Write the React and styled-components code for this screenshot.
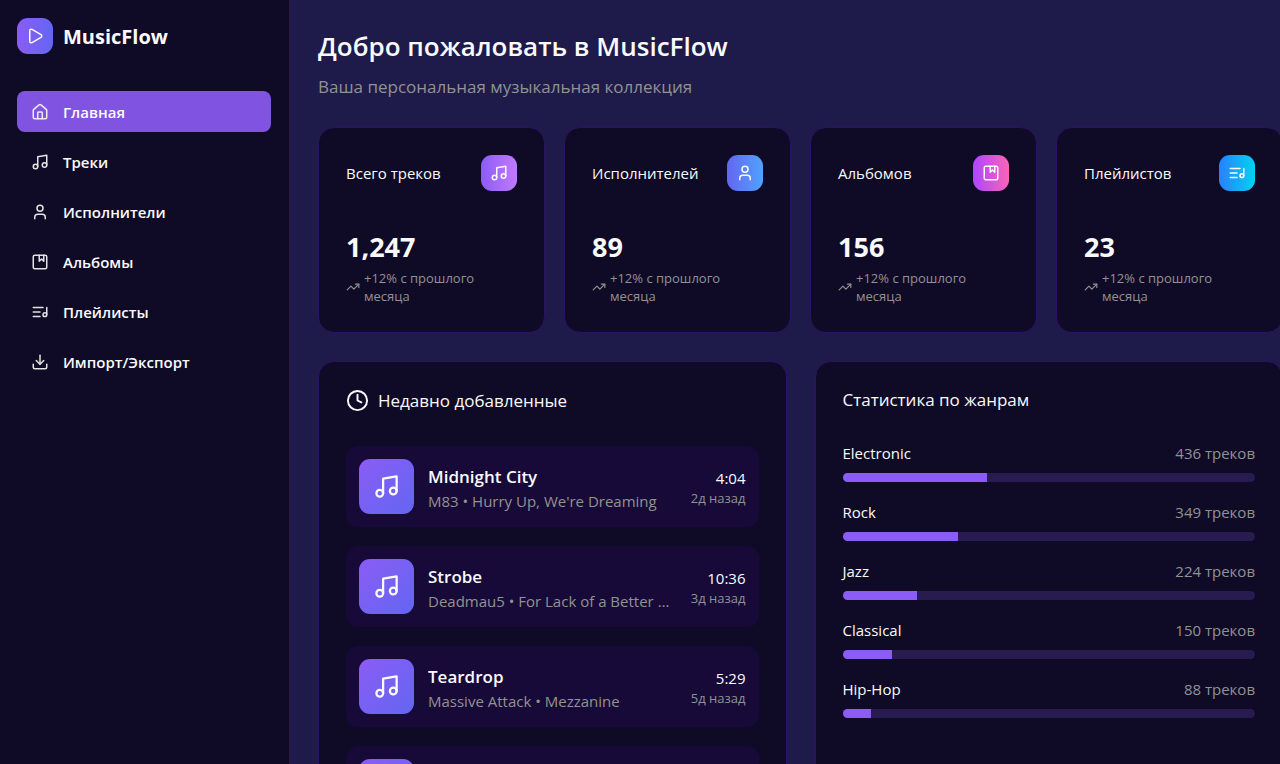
import React from "react";
import styled, { createGlobalStyle } from "styled-components";
import { Play, House, Music, User, Album, Download, TrendingUp, Clock } from "lucide-react";

const color = {
  page: "#1e1b4b",
  panel: "#0f0b27",
  line: "#2e1065",
  row: "#170a38",
  track: "#281b50",
  accent: "#8b5cf6",
  active: "#8054e0",
  text: "#fafafa",
  muted: "#929292",
};

const GlobalStyle = createGlobalStyle`
  *, *::before, *::after { box-sizing: border-box; }
  body {
    margin: 0;
    background: ${color.page};
    color: ${color.text};
    font-family: "Open Sans", "Noto Sans", sans-serif;
    font-size: 15px;
    line-height: 24px;
  }
  h1, h2, h3, p, ul { margin: 0; padding: 0; }
  ul { list-style: none; }
  svg { display: block; flex: none; }
`;

const Layout = styled.div`
  display: flex;
  height: 100vh;
  overflow: hidden;
`;

const Sidebar = styled.aside`
  flex: none;
  width: 290px;
  padding: 18px 18px 18px 17px;
  background: ${color.panel};
  border-right: 1px solid ${color.line};
`;

const Brand = styled.div`
  display: flex;
  align-items: center;
  gap: 10px;
  margin-bottom: 37px;
  font-size: 20px;
  font-weight: 700;
`;

const BrandName = styled.span`
  padding-top: 2px;
`;

const IconTile = styled.span`
  display: flex;
  flex: none;
  align-items: center;
  justify-content: center;
  width: ${(p) => p.$size}px;
  height: ${(p) => p.$size}px;
  border-radius: 11px;
  background: ${(p) => p.$fill};
  color: ${color.text};
`;

const Nav = styled.nav`
  display: flex;
  flex-direction: column;
  gap: 9px;
`;

const NavLink = styled.a`
  display: flex;
  align-items: center;
  gap: 14px;
  height: 41px;
  padding: 0 14px;
  border-radius: 8px;
  background: ${(p) => (p.$active ? color.active : "transparent")};
  color: ${color.text};
  font-weight: 600;
  text-decoration: none;

  svg { opacity: 0.9; }
`;

const Main = styled.main`
  flex: 1;
  min-width: 0;
  padding: 28px 0 0 28px;
  overflow: hidden;
`;

const Content = styled.div`
  margin-right: -3px;
`;

const Title = styled.h1`
  font-size: 26px;
  font-weight: 600;
  line-height: 36px;
`;

const Subtitle = styled.p`
  margin: 9px 0 26px;
  color: ${color.muted};
  font-size: 17px;
  line-height: 28px;
`;

const StatGrid = styled.section`
  display: grid;
  grid-template-columns: repeat(4, 1fr);
  gap: 19px;
  margin-bottom: 28px;
`;

const Card = styled.section`
  min-width: 0;
  padding: 27px;
  background: ${color.panel};
  border: 1px solid ${color.line};
  border-radius: 16px;
`;

const StatHead = styled.div`
  display: flex;
  align-items: center;
  justify-content: space-between;
  margin-bottom: 38px;
`;

const StatName = styled.h3`
  font-size: 15px;
  font-weight: 400;
`;

const StatValue = styled.p`
  font-size: 27px;
  font-weight: 700;
  line-height: 36px;
  margin-bottom: 4px;
`;

const Trend = styled.p`
  display: flex;
  align-items: center;
  gap: 4px;
  color: ${color.muted};
  font-size: 13px;
  line-height: 18px;
`;

const Columns = styled.div`
  display: grid;
  grid-template-columns: repeat(2, 1fr);
  gap: 28px;
`;

const CardTitle = styled.h2`
  display: flex;
  align-items: center;
  gap: 9px;
  font-size: 17px;
  font-weight: 400;
  line-height: 22px;
  margin-bottom: 30px;
`;

const TrackList = styled.ul`
  display: flex;
  flex-direction: column;
  gap: 19px;
  margin-top: 34px;
`;

const TrackRow = styled.li`
  display: flex;
  align-items: center;
  gap: 14px;
  padding: 13px;
  border-radius: 12px;
  background: ${color.row};
`;

const TrackText = styled.div`
  flex: 1;
  min-width: 0;
  padding-top: 4px;
`;

const TrackName = styled.h3`
  font-size: 17px;
  font-weight: 600;
  line-height: 25px;
`;

const TrackMeta = styled.p`
  overflow: hidden;
  color: ${color.muted};
  font-size: 15px;
  text-overflow: ellipsis;
  white-space: nowrap;
`;

const TrackTime = styled.div`
  padding-top: 2px;
  text-align: right;
  font-size: 15px;
  line-height: 20px;
`;

const Ago = styled.p`
  color: ${color.muted};
  font-size: 13px;
`;

const GenreList = styled.ul`
  display: flex;
  flex-direction: column;
  gap: 18px;
`;

const GenreHead = styled.div`
  display: flex;
  justify-content: space-between;
  margin-bottom: 8px;
`;

const GenreCount = styled.span`
  color: ${color.muted};
`;

const Bar = styled.div`
  height: 9px;
  overflow: hidden;
  border-radius: 5px;
  background: ${color.track};
`;

const BarFill = styled.div`
  height: 100%;
  background: ${color.accent};
`;

function Playlist({ size = 24 }) {
  return (
    <svg width={size} height={size} viewBox="0 0 24 24" fill="none" stroke="currentColor" strokeWidth="2" strokeLinecap="round" strokeLinejoin="round" aria-hidden="true">
      <path d="M21 15V6" />
      <path d="M18.5 18a2.5 2.5 0 1 0 0-5 2.5 2.5 0 0 0 0 5Z" />
      <path d="M12 12H3" />
      <path d="M16 6H3" />
      <path d="M12 18H3" />
    </svg>
  );
}

const violet = "linear-gradient(135deg, #8b5cf6, #6366f1)";

const navItems = [
  { label: "Главная", icon: House, active: true },
  { label: "Треки", icon: Music },
  { label: "Исполнители", icon: User },
  { label: "Альбомы", icon: Album },
  { label: "Плейлисты", icon: Playlist },
  { label: "Импорт/Экспорт", icon: Download },
];

const stats = [
  { label: "Всего треков", value: "1,247", icon: Music, fill: "linear-gradient(90deg, #8b5cf6, #c27aff)" },
  { label: "Исполнителей", value: "89", icon: User, fill: "linear-gradient(90deg, #6366f1, #51a2ff)" },
  { label: "Альбомов", value: "156", icon: Album, fill: "linear-gradient(90deg, #ad46ff, #fb64b6)" },
  { label: "Плейлистов", value: "23", icon: Playlist, fill: "linear-gradient(90deg, #2b7fff, #00d3f2)" },
];

const tracks = [
  { name: "Midnight City", meta: "M83 • Hurry Up, We're Dreaming", time: "4:04", ago: "2д назад" },
  { name: "Strobe", meta: "Deadmau5 • For Lack of a Better Name", time: "10:36", ago: "3д назад" },
  { name: "Teardrop", meta: "Massive Attack • Mezzanine", time: "5:29", ago: "5д назад" },
  { name: "", meta: "", time: "", ago: "" },
];

const genres = [
  { name: "Electronic", count: 436, share: 35 },
  { name: "Rock", count: 349, share: 28 },
  { name: "Jazz", count: 224, share: 18 },
  { name: "Classical", count: 150, share: 12 },
  { name: "Hip-Hop", count: 88, share: 7 },
];

export default function App() {
  return (
    <Layout>
      <GlobalStyle />
      <Sidebar>
        <Brand>
          <IconTile $size={36} $fill="linear-gradient(90deg, #8b5cf6, #6366f1)">
            <Play size={18} />
          </IconTile>
          <BrandName>MusicFlow</BrandName>
        </Brand>
        <Nav>
          {navItems.map(({ label, icon: Icon, active }) => (
            <NavLink key={label} href="#" $active={active} aria-current={active ? "page" : undefined}>
              <Icon size={18} />
              {label}
            </NavLink>
          ))}
        </Nav>
      </Sidebar>
      <Main>
        <Content>
          <Title>Добро пожаловать в MusicFlow</Title>
          <Subtitle>Ваша персональная музыкальная коллекция</Subtitle>
          <StatGrid>
            {stats.map(({ label, value, icon: Icon, fill }) => (
              <Card key={label}>
                <StatHead>
                  <StatName>{label}</StatName>
                  <IconTile $size={36} $fill={fill}>
                    <Icon size={18} />
                  </IconTile>
                </StatHead>
                <StatValue>{value}</StatValue>
                <Trend>
                  <TrendingUp size={14} />
                  <span>+12% с прошлого месяца</span>
                </Trend>
              </Card>
            ))}
          </StatGrid>
          <Columns>
            <Card>
              <CardTitle>
                <Clock size={23} />
                Недавно добавленные
              </CardTitle>
              <TrackList>
                {tracks.map((t, i) => (
                  <TrackRow key={i}>
                    <IconTile $size={55} $fill={violet}>
                      <Music size={27} />
                    </IconTile>
                    <TrackText>
                      <TrackName>{t.name}</TrackName>
                      <TrackMeta>{t.meta}</TrackMeta>
                    </TrackText>
                    <TrackTime>
                      {t.time}
                      <Ago>{t.ago}</Ago>
                    </TrackTime>
                  </TrackRow>
                ))}
              </TrackList>
            </Card>
            <Card>
              <CardTitle>Статистика по жанрам</CardTitle>
              <GenreList>
                {genres.map((g) => (
                  <li key={g.name}>
                    <GenreHead>
                      <span>{g.name}</span>
                      <GenreCount>{g.count} треков</GenreCount>
                    </GenreHead>
                    <Bar>
                      <BarFill style={{ width: `${g.share}%` }} />
                    </Bar>
                  </li>
                ))}
              </GenreList>
            </Card>
          </Columns>
        </Content>
      </Main>
    </Layout>
  );
}
